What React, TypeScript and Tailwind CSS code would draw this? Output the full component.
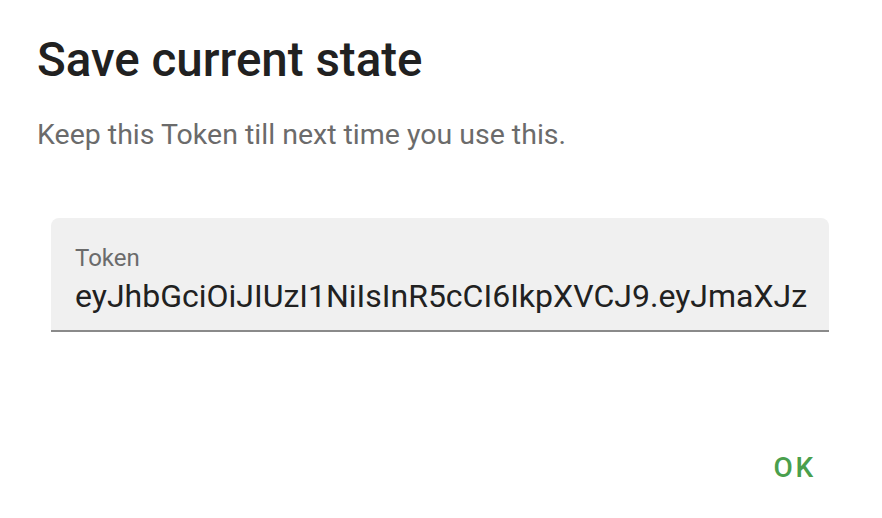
import React from "react";

export default function App() {
  return (
    <div
      className="w-[882px] h-[518px] bg-white overflow-hidden flex flex-col"
      style={{ fontFamily: "Roboto, 'Liberation Sans', sans-serif" }}
    >
      <h2 className="pl-[37px] pt-[30px] text-[47.5px] leading-[60px] font-medium text-[#212121]">
        Save current state
      </h2>
      <p className="pl-[37px] mt-[25px] text-[28.5px] leading-[40px] text-[#6b6b6b]">
        Keep this Token till next time you use this.
      </p>
      <div className="ml-[51px] mt-[63px] w-[778px] h-[114px] bg-[#f0f0f0] rounded-t-[8px] border-b-2 border-[#8a8a8a] flex flex-col pl-[24px] pt-[25px] overflow-hidden">
        <span className="text-[24px] leading-[30px] text-[#6b6b6b]">Token</span>
        <span className="mt-[3px] text-[32px] leading-[40px] text-[#212121] whitespace-nowrap">
          eyJhbGciOiJIUzI1NiIsInR5cCI6IkpXVCJ9.eyJmaXJz
        </span>
      </div>
      <div className="flex justify-end pr-[66px] mt-[115px]">
        <span className="text-[28px] font-medium tracking-[2.8px] text-[#4a9f4d]">OK</span>
      </div>
    </div>
  );
}
